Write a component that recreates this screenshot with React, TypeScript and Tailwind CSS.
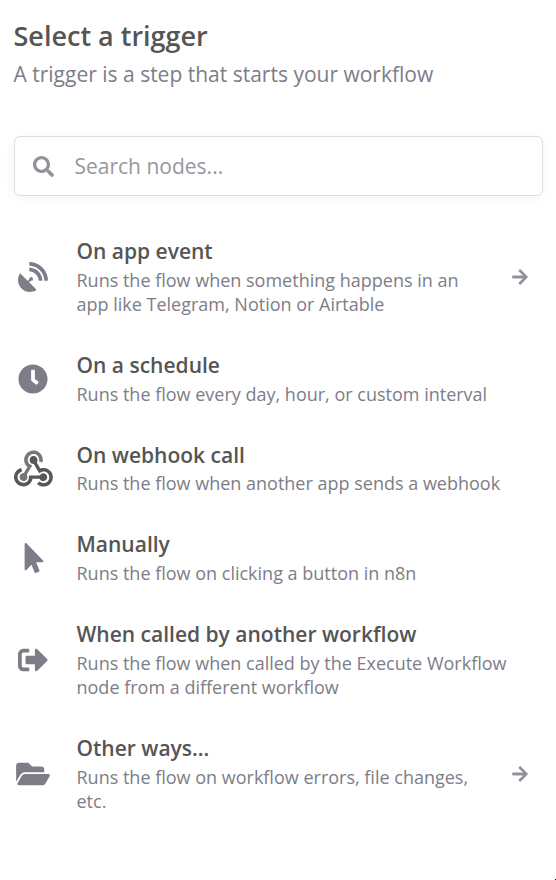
import type { ReactNode } from "react";
import {
  FaArrowRight,
  FaClock,
  FaFolderOpen,
  FaMousePointer,
  FaSatelliteDish,
  FaSearch,
  FaSignOutAlt,
} from "react-icons/fa";

function WebhookIcon() {
  return (
    <svg viewBox="0 0 256 239" className="-mr-px h-[37px] w-[39px] shrink-0">
      <path
        fill="#777777"
        d="M119.54 100.503c-10.61 17.836-20.775 35.108-31.152 52.25-2.665 4.401-3.984 7.986-1.855 13.58 5.878 15.454-2.414 30.493-17.998 34.575-14.697 3.851-29.016-5.808-31.932-21.543-2.584-13.927 8.224-27.58 23.58-29.757 1.286-.184 2.6-.205 4.762-.367l23.358-39.168C73.612 95.465 64.868 78.39 66.803 57.23c1.368-14.957 7.25-27.883 18-38.477 20.59-20.288 52.002-23.573 76.246-8.001 23.284 14.958 33.948 44.094 24.858 69.031-6.854-1.858-13.756-3.732-21.343-5.79 2.854-13.865.743-26.315-8.608-36.981-6.178-7.042-14.106-10.733-23.12-12.093-18.072-2.73-35.815 8.88-41.08 26.618-5.976 20.13 3.069 36.575 27.784 48.967Z"
      />
      <path
        fill="#585858"
        d="M149.841 79.41c7.475 13.187 15.065 26.573 22.587 39.836 38.02-11.763 66.686 9.284 76.97 31.817 12.422 27.219 3.93 59.457-20.465 76.25-25.04 17.238-56.707 14.293-78.892-7.851 5.654-4.733 11.336-9.487 17.407-14.566 21.912 14.192 41.077 13.524 55.305-3.282 12.133-14.337 11.87-35.714-.615-49.75-14.408-16.197-33.707-16.691-57.035-1.143-9.677-17.168-19.522-34.199-28.893-51.491-3.16-5.828-6.648-9.21-13.77-10.443-11.893-2.062-19.571-12.275-20.032-23.717-.453-11.316 6.214-21.545 16.634-25.53 10.322-3.949 22.435-.762 29.378 8.014 5.674 7.17 7.477 15.24 4.491 24.083-.83 2.466-1.905 4.852-3.07 7.774Z"
      />
      <path
        fill="#585858"
        d="M167.707 187.21h-45.77c-4.387 18.044-13.863 32.612-30.19 41.876-12.693 7.2-26.373 9.641-40.933 7.29-26.808-4.323-48.728-28.456-50.658-55.63-2.184-30.784 18.975-58.147 47.178-64.293 1.947 7.071 3.915 14.21 5.862 21.264-25.876 13.202-34.832 29.836-27.59 50.636 6.375 18.304 24.484 28.337 44.147 24.457 20.08-3.962 30.204-20.65 28.968-47.432 19.036 0 38.088-.197 57.126.097 7.434.117 13.173-.654 18.773-7.208 9.22-10.784 26.191-9.811 36.121.374 10.148 10.409 9.662 27.157-1.077 37.127-10.361 9.62-26.73 9.106-36.424-1.26-1.992-2.136-3.562-4.673-5.533-7.298Z"
      />
    </svg>
  );
}

type Trigger = {
  title: string;
  description: ReactNode;
  icon: ReactNode;
  arrow?: boolean;
};

const triggers: Trigger[] = [
  {
    title: "On app event",
    description: (
      <>
        Runs the flow when something happens in an
        <br />
        app like Telegram, Notion or Airtable
      </>
    ),
    icon: <FaSatelliteDish className="size-[30px]" />,
    arrow: true,
  },
  {
    title: "On a schedule",
    description: "Runs the flow every day, hour, or custom interval",
    icon: <FaClock className="size-[30px]" />,
  },
  {
    title: "On webhook call",
    description: "Runs the flow when another app sends a webhook",
    icon: <WebhookIcon />,
  },
  {
    title: "Manually",
    description: "Runs the flow on clicking a button in n8n",
    icon: <FaMousePointer className="ml-px size-[30px]" />,
  },
  {
    title: "When called by another workflow",
    description: (
      <>
        Runs the flow when called by the Execute Workflow
        <br />
        node from a different workflow
      </>
    ),
    icon: <FaSignOutAlt className="size-[30px]" />,
  },
  {
    title: "Other ways...",
    description: (
      <>
        Runs the flow on workflow errors, file changes,
        <br />
        etc.
      </>
    ),
    icon: <FaFolderOpen className="h-[30px] w-[34px]" />,
    arrow: true,
  },
];

function TriggerRow({ title, description, icon, arrow }: Trigger) {
  return (
    <li className="flex items-center pb-[34.85px]">
      <div className="mr-px flex w-[38px] shrink-0 items-center justify-center pt-px text-[#7d7d87]">
        {icon}
      </div>
      <div className="ml-[23.5px] grow whitespace-nowrap">
        <h2 className="text-[21px] leading-[29.5px] font-semibold text-[#555555]">{title}</h2>
        <p className="mt-[1.25px] text-[18px] leading-[24.125px] text-[#7d7d87]">{description}</p>
      </div>
      {arrow && <FaArrowRight className="mt-px mr-[14px] size-[18px] shrink-0 text-[#909298]" />}
    </li>
  );
}

export default function App() {
  return (
    <main className="flex h-[880px] w-[556px] flex-col overflow-hidden bg-white pr-[13px] pl-[14px] font-['Open_Sans',sans-serif]">
      <header className="pt-[18px]">
        <h1 className="-ml-[0.5px] text-[27px] leading-[36px] font-semibold text-[#555555]">
          Select a trigger
        </h1>
        <p className="mt-[5px] -ml-[0.5px] text-[21px] leading-[30px] text-[#7d7d87]">
          A trigger is a step that starts your workflow
        </p>
      </header>
      <label className="mt-[47px] flex h-[60px] shrink-0 items-center rounded-[6px] border border-[#dbdce8] bg-white pl-[18px] shadow-[0_3px_15px_rgba(0,0,0,0.04)]">
        <FaSearch className="mt-px size-[21px] text-[#909298]" />
        <input
          placeholder="Search nodes..."
          className="mt-[2px] ml-[20.5px] grow bg-transparent text-[21px] text-[#555555] outline-none placeholder:text-[#96979e]"
        />
      </label>
      <ul className="mt-[41.1px]">
        {triggers.map((trigger) => (
          <TriggerRow key={trigger.title} {...trigger} />
        ))}
      </ul>
      <span className="mt-auto -mr-[13px] size-px shrink-0 self-end bg-black" />
    </main>
  );
}
